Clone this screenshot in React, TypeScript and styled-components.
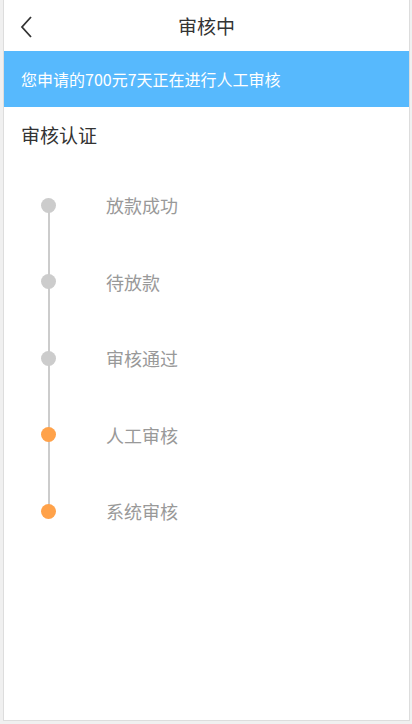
import React from 'react'
import styled, { createGlobalStyle } from 'styled-components'

const GlobalStyle = createGlobalStyle`
  html, body {
    margin: 0;
    padding: 0;
    background: #f0f0f0;
    font-family: "Noto Sans CJK SC", "Liberation Sans", sans-serif;
  }
`

const Page = styled.div`
  box-sizing: border-box;
  margin: 0 2px 0 3px;
  height: 721px;
  background: #ffffff;
  border: 1px solid #dddddd;
  border-top: none;
`

const Header = styled.div`
  position: relative;
  height: 51px;
  display: flex;
  align-items: center;
  justify-content: center;
  font-size: 19px;
  color: #333333;
`

const BackButton = styled.div`
  position: absolute;
  left: 14px;
  top: 15px;
  width: 20px;
  height: 24px;
`

const Banner = styled.div`
  height: 56px;
  display: flex;
  align-items: center;
  padding-left: 17px;
  background: #57b9fd;
  color: #ffffff;
  font-size: 16px;
`

const SectionTitle = styled.div`
  padding: 14px 0 0 17px;
  height: 40px;
  font-size: 19px;
  color: #333333;
`

const Timeline = styled.div`
  position: relative;
  padding-top: 6px;
  padding-left: 37px;
`

const Line = styled.div`
  position: absolute;
  left: 44px;
  top: 44px;
  width: 2px;
  height: 306px;
  background: #cccccc;
`

const StepList = styled.div`
  position: relative;
  display: flex;
  flex-direction: column;
`

const StepRow = styled.div`
  display: flex;
  align-items: center;
  height: 76.5px;
`

const Dot = styled.span<{ $active?: boolean }>`
  width: 15px;
  height: 15px;
  border-radius: 50%;
  background: ${p => (p.$active ? '#ffa24a' : '#cccccc')};
  margin-right: 50px;
`

const StepLabel = styled.span`
  font-size: 18px;
  color: #999999;
`

const steps = [
  { label: '放款成功', active: false },
  { label: '待放款', active: false },
  { label: '审核通过', active: false },
  { label: '人工审核', active: true },
  { label: '系统审核', active: true },
]

export default function App() {
  return (
    <>
      <GlobalStyle />
      <Page>
        <Header>
          <BackButton>
            <svg width="20" height="24" viewBox="0 0 20 24">
              <polyline points="13,2 4,12 13,22" fill="none" stroke="#333" strokeWidth="1.8" />
            </svg>
          </BackButton>
          审核中
        </Header>
        <Banner>您申请的700元7天正在进行人工审核</Banner>
        <SectionTitle>审核认证</SectionTitle>
        <Timeline>
          <Line />
          <StepList>
            {steps.map(s => (
              <StepRow key={s.label}>
                <Dot $active={s.active} />
                <StepLabel>{s.label}</StepLabel>
              </StepRow>
            ))}
          </StepList>
        </Timeline>
      </Page>
    </>
  )
}
